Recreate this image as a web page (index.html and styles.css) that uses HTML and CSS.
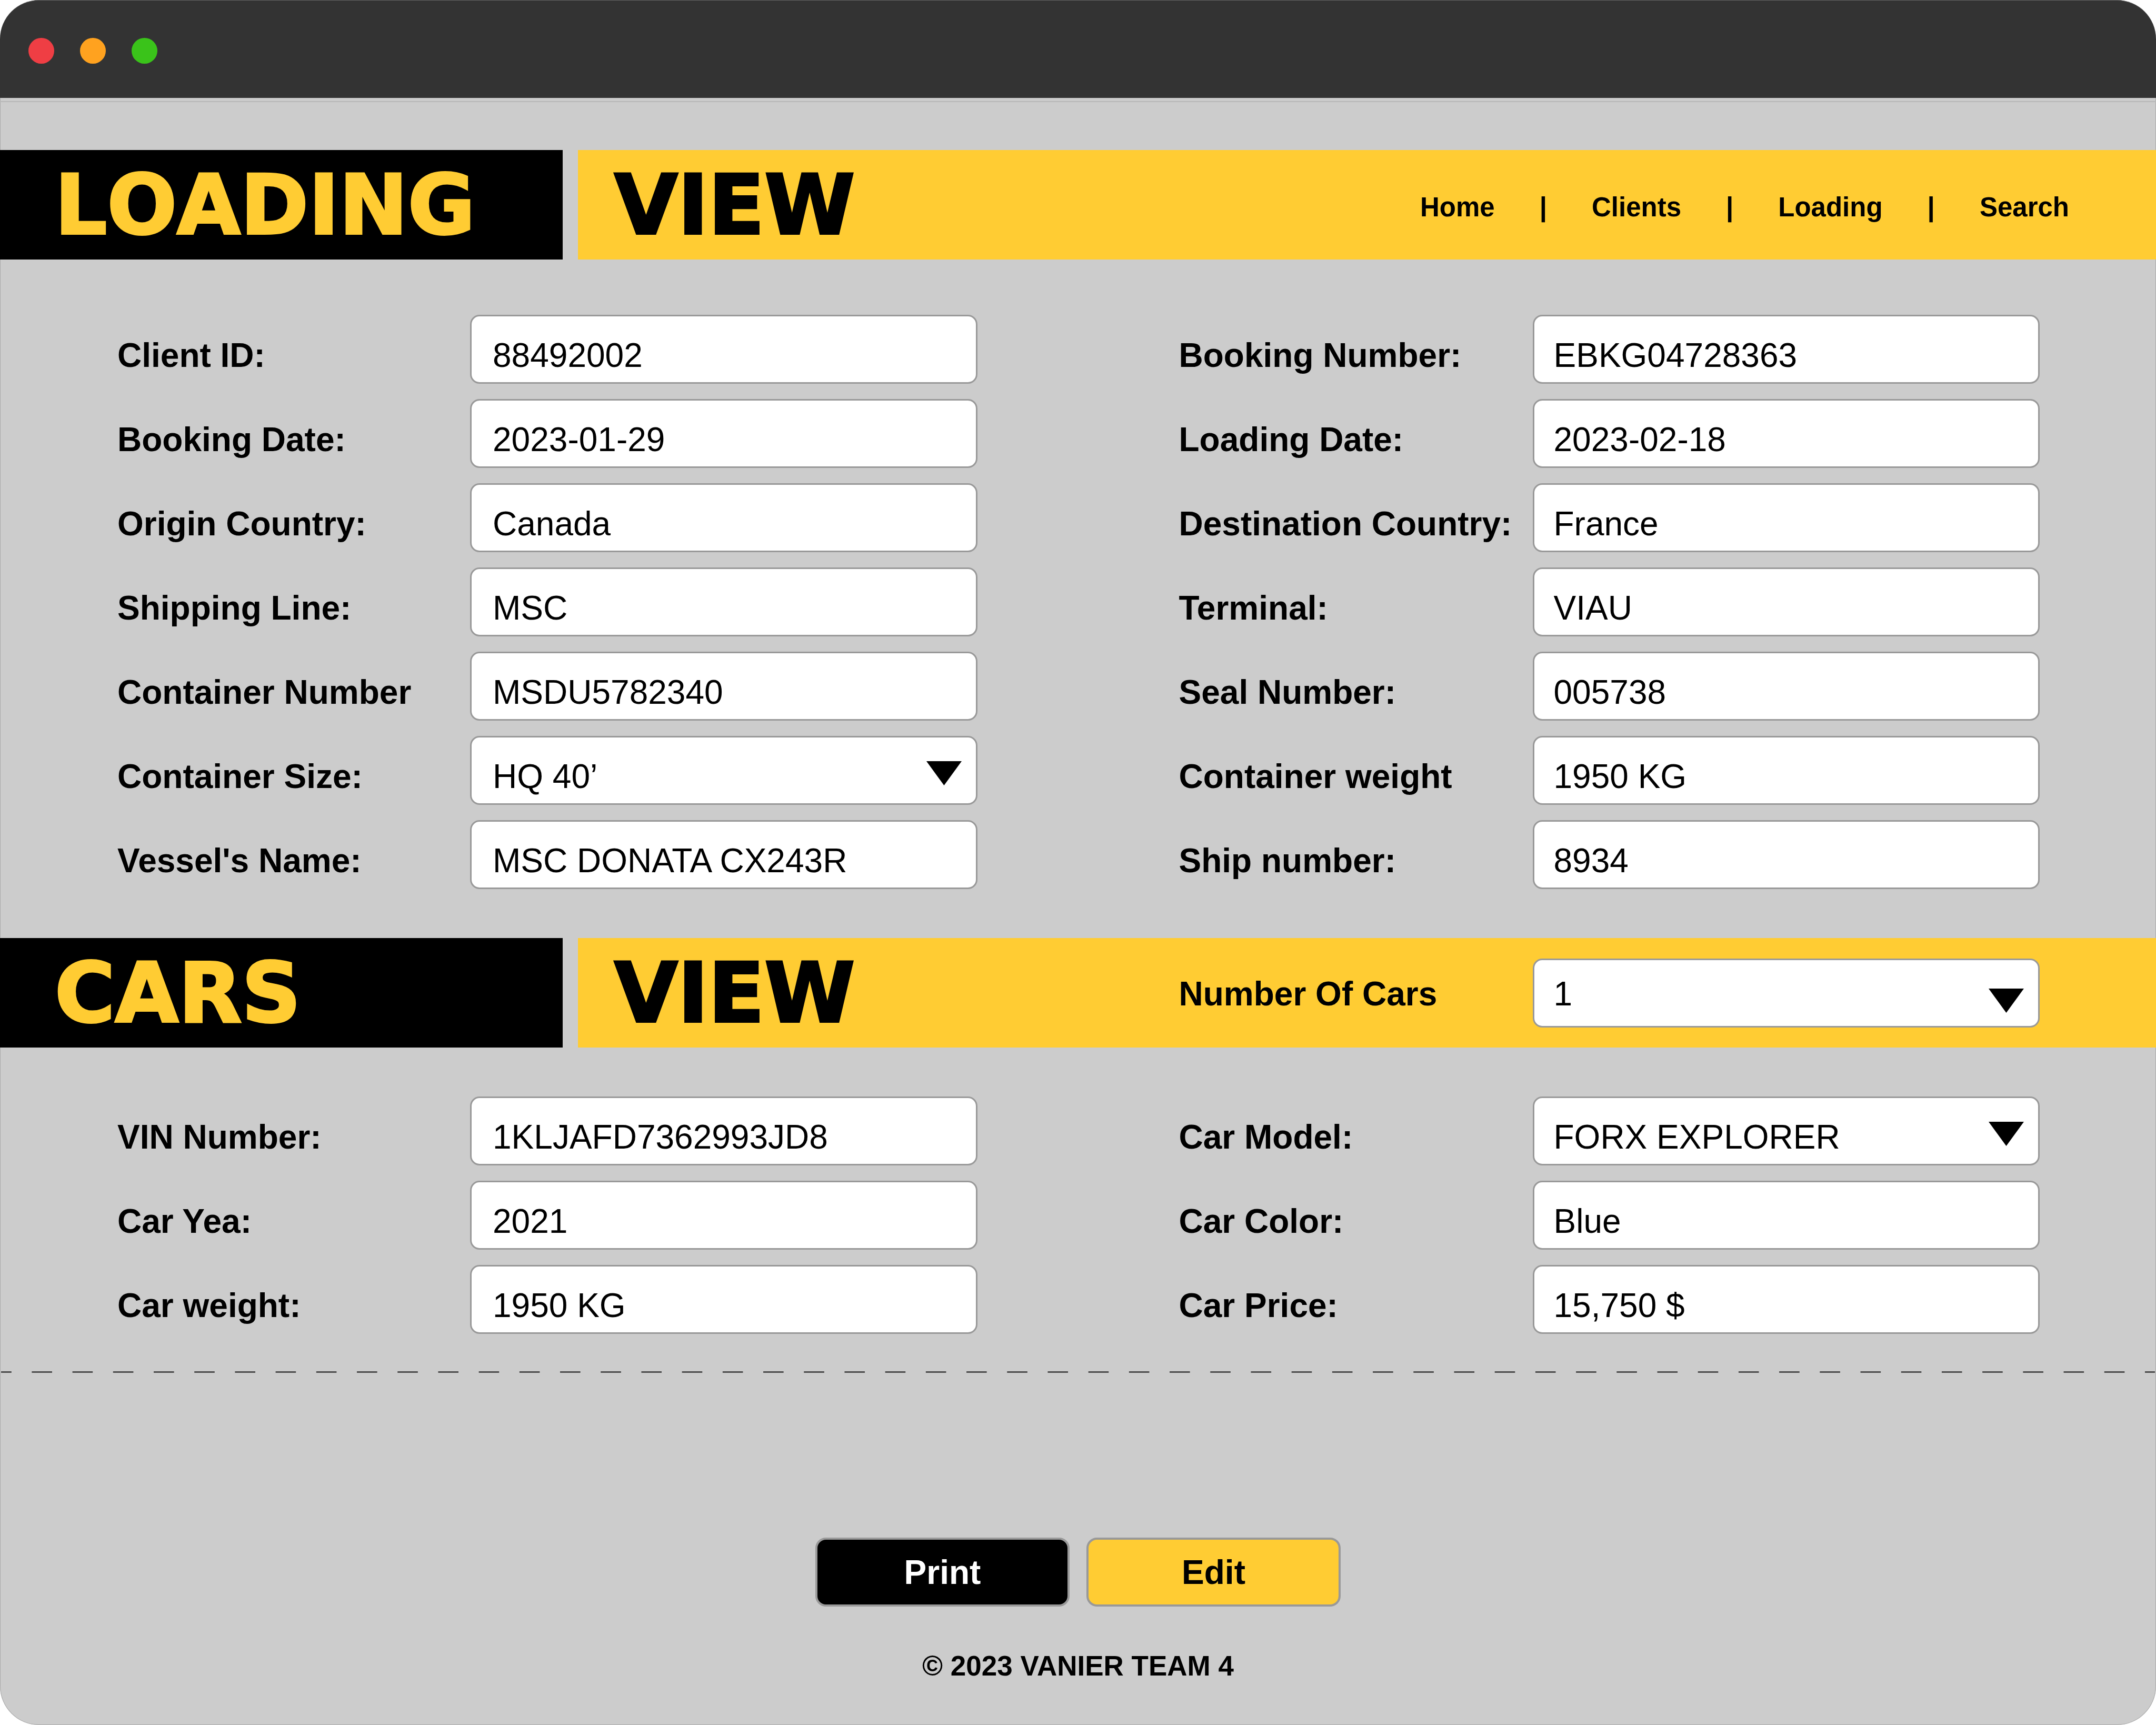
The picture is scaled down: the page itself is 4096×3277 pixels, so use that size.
FILE: index.html
```html
<!DOCTYPE html>
<html lang="en">
<head>
<meta charset="utf-8">
<title>Loading View</title>
<link rel="stylesheet" href="styles.css">
</head>
<body>
<div class="window">
  <div class="titlebar">
    <span class="dot dot-red"></span>
    <span class="dot dot-orange"></span>
    <span class="dot dot-green"></span>
  </div>

  <header class="banner">
    <h1 class="banner-name">LOADING</h1>
    <div class="banner-main">
      <span class="banner-mode">VIEW</span>
      <nav class="nav">
        <a href="#home">Home</a><span>|</span>
        <a href="#clients">Clients</a><span>|</span>
        <a href="#loading">Loading</a><span>|</span>
        <a href="#search">Search</a>
      </nav>
    </div>
  </header>

  <form class="form">
    <section class="fields fields-loading">
      <div class="column">
        <div class="field"><label for="client-id">Client ID:</label><input id="client-id" type="text" value="88492002"></div>
        <div class="field"><label for="booking-date">Booking Date:</label><input id="booking-date" type="text" value="2023-01-29"></div>
        <div class="field"><label for="origin">Origin Country:</label><input id="origin" type="text" value="Canada"></div>
        <div class="field"><label for="line">Shipping Line:</label><input id="line" type="text" value="MSC"></div>
        <div class="field"><label for="container">Container Number</label><input id="container" type="text" value="MSDU5782340"></div>
        <div class="field"><label for="size">Container Size:</label>
          <div class="picker"><select id="size"><option>HQ 40’</option></select><svg class="arrow" viewBox="0 0 67 46"><path d="M0 0H67L33.500 46Z"/></svg></div>
        </div>
        <div class="field"><label for="vessel">Vessel's Name:</label><input id="vessel" type="text" value="MSC DONATA CX243R"></div>
      </div>
      <div class="column">
        <div class="field"><label for="booking-number">Booking Number:</label><input id="booking-number" type="text" value="EBKG04728363"></div>
        <div class="field"><label for="loading-date">Loading Date:</label><input id="loading-date" type="text" value="2023-02-18"></div>
        <div class="field"><label for="destination">Destination Country:</label><input id="destination" type="text" value="France"></div>
        <div class="field"><label for="terminal">Terminal:</label><input id="terminal" type="text" value="VIAU"></div>
        <div class="field"><label for="seal">Seal Number:</label><input id="seal" type="text" value="005738"></div>
        <div class="field"><label for="container-weight">Container weight</label><input id="container-weight" type="text" value="1950 KG"></div>
        <div class="field"><label for="ship">Ship number:</label><input id="ship" type="text" value="8934"></div>
      </div>
    </section>

    <div class="banner">
      <h2 class="banner-name">CARS</h2>
      <div class="banner-main">
        <span class="banner-mode">VIEW</span>
        <div class="field field-banner"><label for="cars">Number Of Cars</label>
          <div class="picker"><select id="cars"><option>1</option></select><svg class="arrow" viewBox="0 0 67 46"><path d="M0 0H67L33.500 46Z"/></svg></div>
        </div>
      </div>
    </div>

    <section class="fields fields-cars">
      <div class="column">
        <div class="field"><label for="vin">VIN Number:</label><input id="vin" type="text" value="1KLJAFD7362993JD8"></div>
        <div class="field"><label for="year">Car Yea:</label><input id="year" type="text" value="2021"></div>
        <div class="field"><label for="car-weight">Car weight:</label><input id="car-weight" type="text" value="1950 KG"></div>
      </div>
      <div class="column">
        <div class="field"><label for="model">Car Model:</label>
          <div class="picker"><select id="model"><option>FORX EXPLORER</option></select><svg class="arrow" viewBox="0 0 67 46"><path d="M0 0H67L33.500 46Z"/></svg></div>
        </div>
        <div class="field"><label for="color">Car Color:</label><input id="color" type="text" value="Blue"></div>
        <div class="field"><label for="price">Car Price:</label><input id="price" type="text" value="15,750 $"></div>
      </div>
    </section>

    <div class="divider"></div>

    <div class="actions">
      <button class="button button-dark" type="button">Print</button>
      <button class="button" type="button">Edit</button>
    </div>
  </form>

  <footer class="footer">© 2023 VANIER TEAM 4</footer>
</div>
</body>
</html>
```
FILE: styles.css
```css
* {
  box-sizing: border-box;
}

body {
  margin: 0;
  background: #fff;
  color: #000;
  font-family: "Liberation Sans", Arial, sans-serif;
}

.window {
  display: flex;
  flex-direction: column;
  min-height: 100vh;
  overflow: hidden;
  border-radius: 74px;
  background: #ccc;
  box-shadow: inset 0 0 0 1px #aaa;
}

/* Window bar */
.titlebar {
  display: flex;
  align-items: center;
  gap: 49px;
  height: 186px;
  padding: 6px 54px 0;
  border-top: 1px solid #666;
  border-radius: 74px 74px 0 0;
  background: #333;
}

.titlebar + .banner {
  margin-top: 6px;
  border-top: 2px solid #b8b8b8;
  padding-top: 91px;
}

.dot {
  width: 49px;
  height: 49px;
  margin-bottom: 1px;
  border-radius: 50%;
}

.dot-red { background: #ef3e44; }
.dot-orange { background: #ffa21f; }
.dot-green { background: #3ac31a; }

/* Section banners */
.banner {
  display: flex;
  gap: 29px;
}

.banner-name,
.banner-mode {
  margin: 0;
  padding-top: 2px;
  font-family: "DejaVu Sans", "Arial Black", sans-serif;
  font-size: 156px;
  font-weight: 700;
  font-kerning: none;
  line-height: 206px;
  -webkit-text-stroke: 4px currentColor;
}

.banner-name {
  flex: 0 0 1069px;
  padding-left: 104px;
  background: #000;
  color: #fc3;
}

.banner-main {
  display: flex;
  flex: 1;
  align-items: center;
  justify-content: space-between;
  padding-left: 69px;
  background: #fc3;
}

.nav {
  display: flex;
  gap: 85px;
  padding: 8px 165px 0 0;
  font-size: 51px;
  font-weight: 700;
}

.nav a {
  color: inherit;
  text-decoration: none;
}

/* Fields */
.fields {
  display: grid;
  grid-template-columns: 1fr 1fr;
  gap: 383px;
}

.fields-loading { padding: 105px 221px 93px; }
.fields-cars { padding: 93px 221px 71px; }

.column {
  display: grid;
  gap: 29px;
}

.field {
  display: grid;
  grid-template-columns: 672px 1fr;
  align-items: center;
  font-size: 64px;
  line-height: 72px;
}

.field label {
  padding-top: 22px;
  font-weight: 700;
  white-space: nowrap;
}

.field input,
.field select {
  display: block;
  width: 100%;
  height: 131px;
  margin: 0;
  padding: 22px 37px 0;
  appearance: none;
  border: 3px solid #999;
  border-radius: 18px;
  outline: 0;
  background: #fff;
  color: #000;
  font: inherit;
}

.column:first-child label {
  padding-left: 2px;
}

.column:first-child input,
.column:first-child select {
  padding-left: 40px;
}

.picker {
  position: relative;
}

.arrow {
  position: absolute;
  top: 48px;
  right: 30px;
  width: 67px;
  height: 46px;
  pointer-events: none;
}

.field-banner {
  width: calc((100vw - 825px) / 2);
  margin-right: 221px;
}

.field-banner label,
.field-banner select {
  padding-top: 4px;
}

.field-banner .arrow {
  top: 57px;
}

.divider {
  height: 3px;
  margin: 0 2px;
  background: linear-gradient(90deg, #4d4d4d 25%, transparent 25% 75%, #4d4d4d 75%) 0 0 / 77px 3px round;
}

/* Buttons and footer */
.actions {
  display: flex;
  justify-content: center;
  gap: 32px;
  padding-top: 313px;
}

.button {
  width: 483px;
  height: 131px;
  padding: 0;
  border: 4px solid #999;
  border-radius: 20px;
  background: #fc3;
  color: #000;
  font: 700 64px/72px "Liberation Sans", Arial, sans-serif;
}

.button-dark {
  background: #000;
  color: #fff;
}

.footer {
  padding: 83px 0 81px;
  font-size: 53px;
  font-weight: 700;
  line-height: 60px;
  text-align: center;
}
```
